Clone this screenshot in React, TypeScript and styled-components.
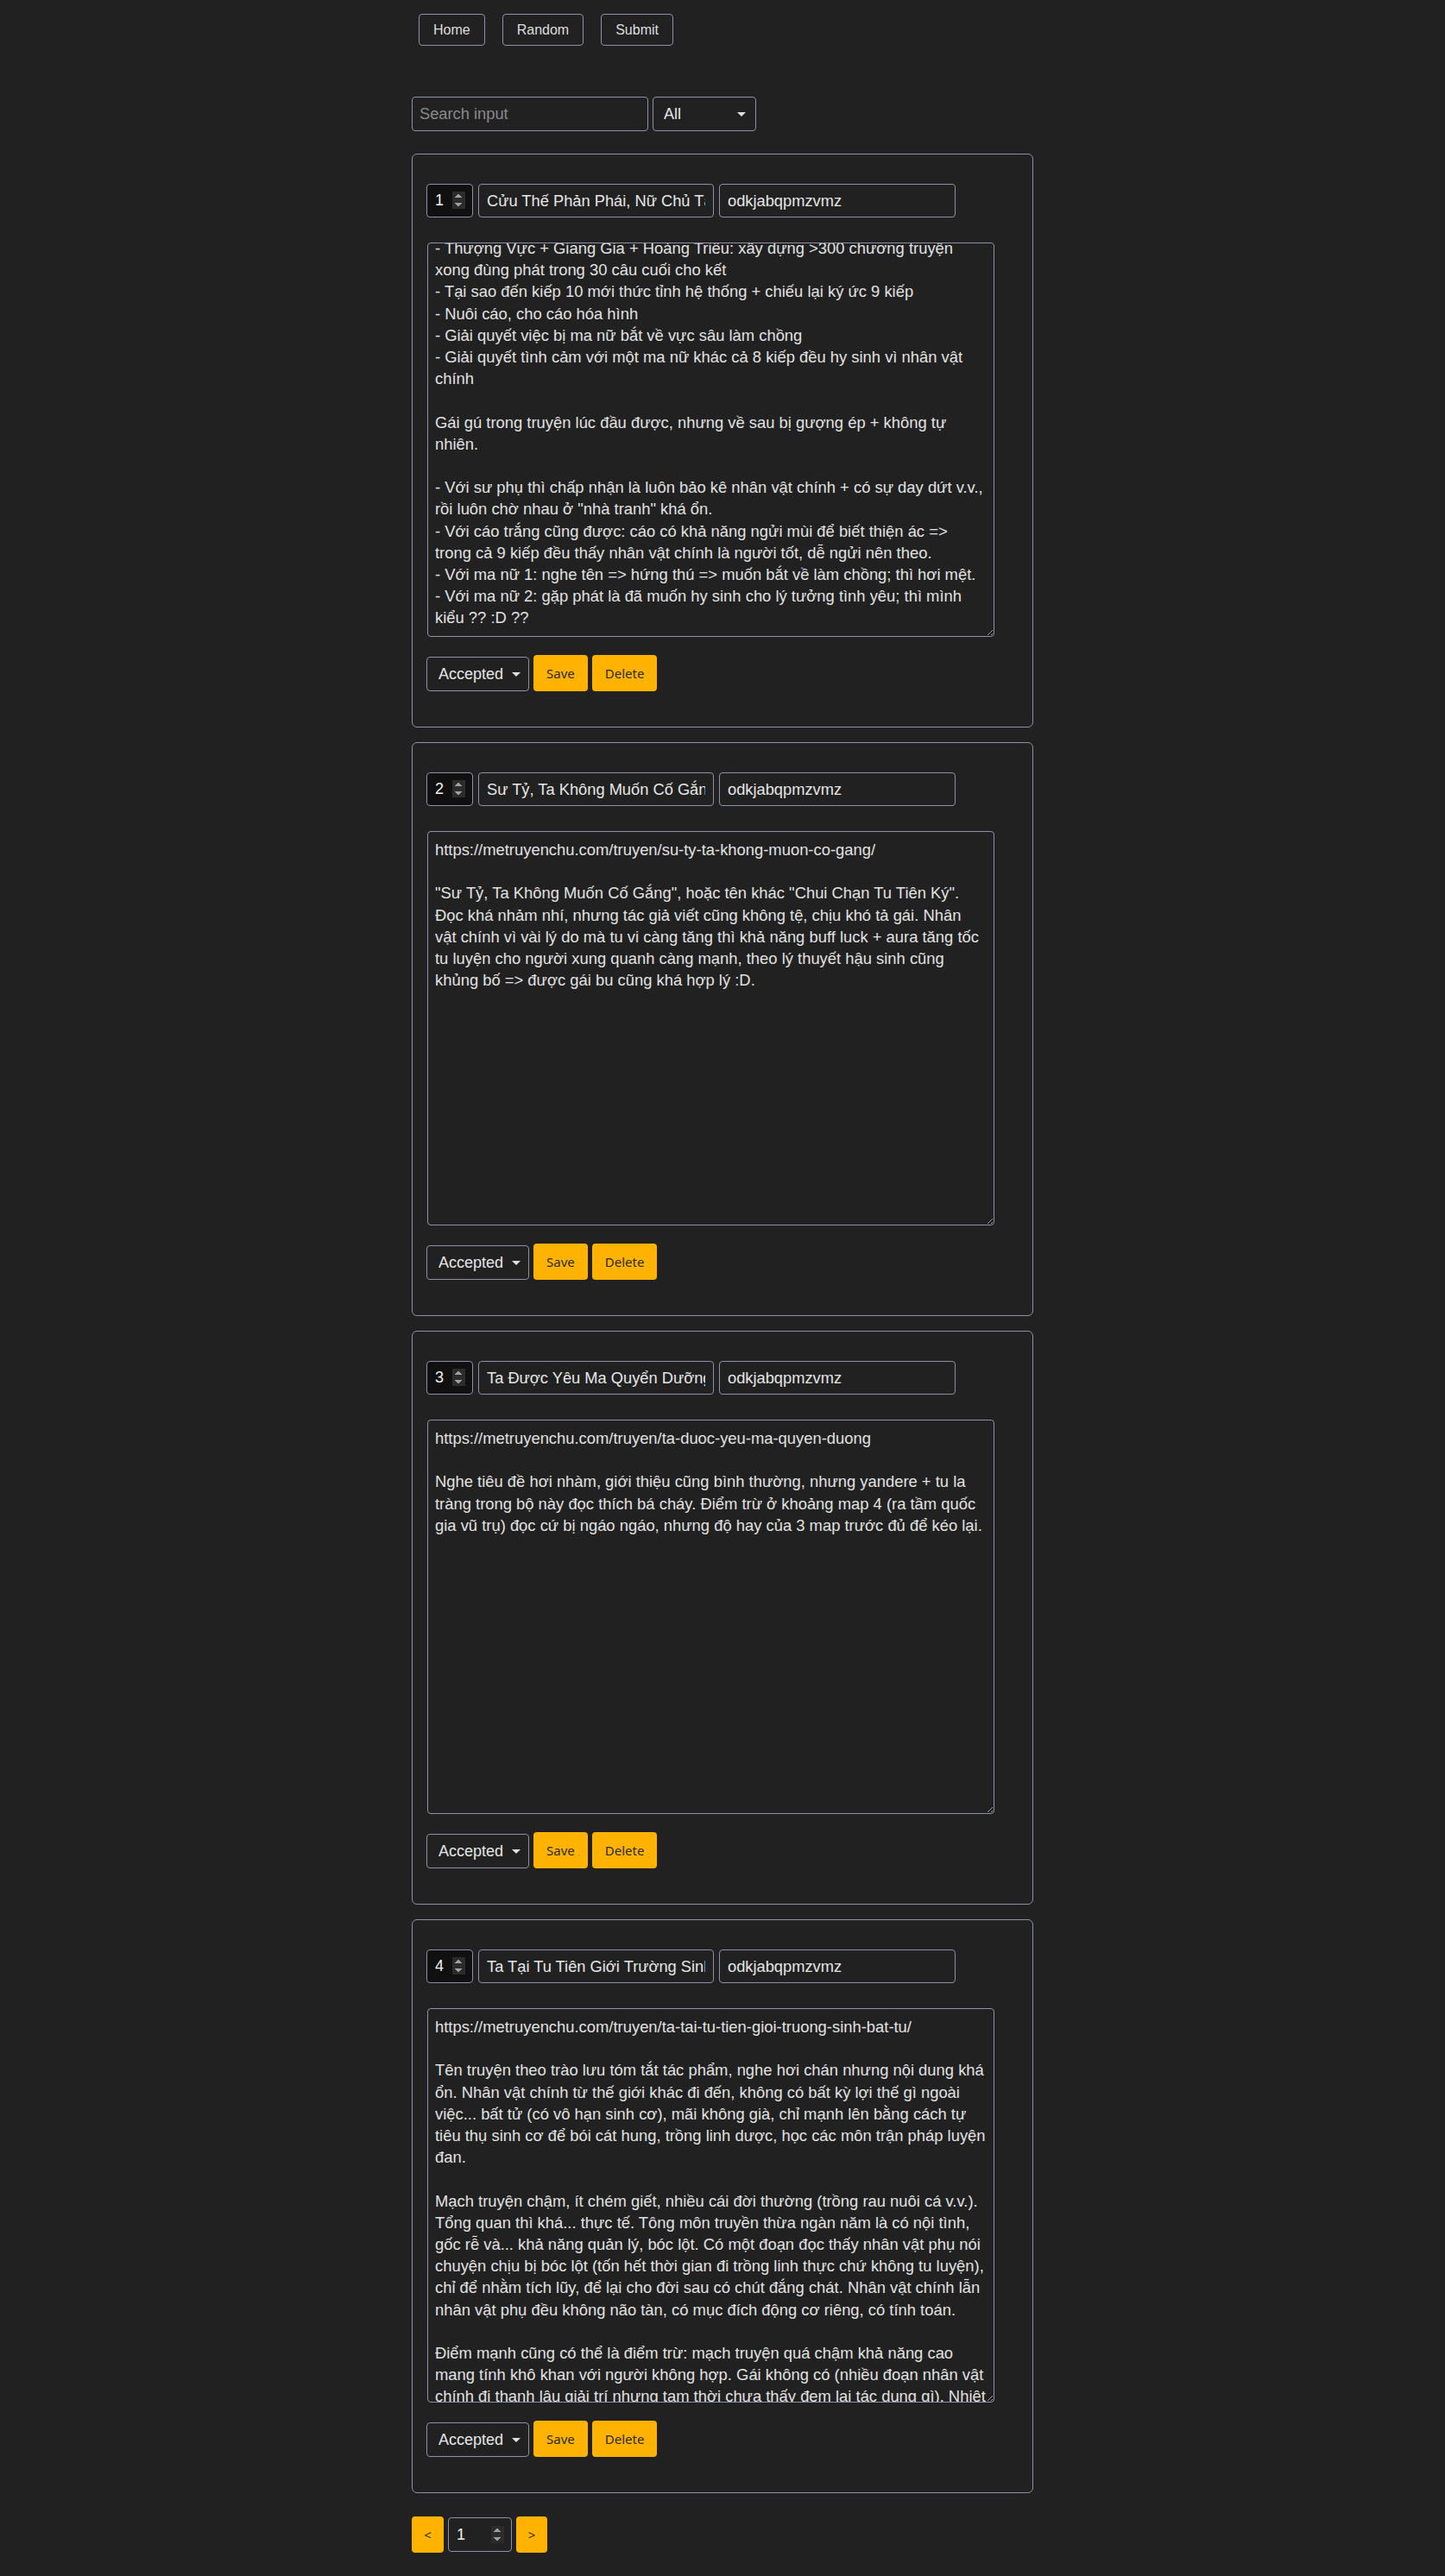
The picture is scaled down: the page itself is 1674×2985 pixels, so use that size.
import React, { useLayoutEffect, useRef } from "react";
import styled, { createGlobalStyle } from "styled-components";

const BORDER = "#8d90a7";
const AMBER = "#ffb300";
const FIELD_FONT = `18.3px "Liberation Sans", Arial, sans-serif`;

const GlobalStyle = createGlobalStyle`
  html, body {
    background: #212121;
  }
  body {
    margin: 0;
    font-family: "Liberation Sans", Arial, sans-serif;
    color: #e4e4e4;
  }
  * {
    box-sizing: border-box;
  }
`;

const Page = styled.div`
  width: 720px;
  margin: 0 auto;
  padding: 16px 0 26px;
  display: flex;
  flex-direction: column;
`;

const Nav = styled.nav`
  display: flex;
  gap: 20px;
  padding-left: 8px;
`;

const NavButton = styled.button`
  height: 37px;
  padding: 0 16px;
  border: 1px solid ${BORDER};
  border-radius: 4px;
  background: transparent;
  color: #dedede;
  font: 16px "Liberation Sans", Arial, sans-serif;
  cursor: pointer;
`;

const SearchRow = styled.div`
  display: flex;
  gap: 5px;
  margin-top: 59px;
`;

const SearchInput = styled.input`
  width: 274px;
  height: 40px;
  padding: 0 8px;
  border: 1px solid ${BORDER};
  border-radius: 4px;
  background: transparent;
  color: #e6e6e6;
  font: ${FIELD_FONT};
  outline: none;
  &::placeholder {
    color: #8a8a8a;
  }
`;

const SelectWrap = styled.div<{ $w: number; $h: number; $arrowRight: number }>`
  position: relative;
  width: ${(p) => p.$w}px;
  height: ${(p) => p.$h}px;
  &::after {
    content: "";
    position: absolute;
    right: ${(p) => p.$arrowRight}px;
    top: 50%;
    margin-top: -2px;
    border-left: 5px solid transparent;
    border-right: 5px solid transparent;
    border-top: 5px solid #e0e0e0;
    pointer-events: none;
  }
`;

const Select = styled.select<{ $pl: number }>`
  appearance: none;
  -webkit-appearance: none;
  width: 100%;
  height: 100%;
  padding: 0 24px 0 ${(p) => p.$pl}px;
  border: 1px solid ${BORDER};
  border-radius: 4px;
  background: transparent;
  color: #e6e6e6;
  font: 18px "Liberation Sans", Arial, sans-serif;
  outline: none;
  option {
    background: #212121;
  }
`;

const CardList = styled.div`
  display: flex;
  flex-direction: column;
  gap: 17px;
  margin-top: 26px;
`;

const Card = styled.section`
  border: 1px solid ${BORDER};
  border-radius: 6px;
  padding: 34px 16px 41px;
  display: flex;
  flex-direction: column;
`;

const FieldRow = styled.div`
  display: flex;
  gap: 6px;
  height: 39px;
`;

const NumberInput = styled.input<{ $w: number; $h?: number; $dark?: boolean }>`
  width: ${(p) => p.$w}px;
  height: ${(p) => (p.$h ? `${p.$h}px` : "100%")};
  padding: 0 8px 0 9px;
  border: 1px solid ${BORDER};
  border-radius: 4px;
  background: ${(p) => (p.$dark ? "#101010" : "transparent")};
  color: #f2f2f2;
  color-scheme: dark;
  font: 18px "Liberation Sans", Arial, sans-serif;
  outline: none;
  &::-webkit-inner-spin-button,
  &::-webkit-outer-spin-button {
    opacity: 1;
  }
`;

const TextInput = styled.input<{ $w: number }>`
  width: ${(p) => p.$w}px;
  height: 100%;
  padding: 0 9px;
  border: 1px solid ${BORDER};
  border-radius: 4px;
  background: transparent;
  color: #e6e6e6;
  font: ${FIELD_FONT};
  outline: none;
`;

const ReviewText = styled.textarea`
  margin: 29px 0 0 1px;
  width: 657px;
  height: 457px;
  padding: 8px 9.2px 8px 8px;
  border: 1px solid ${BORDER};
  border-radius: 4px;
  background: transparent;
  color: #e2e2e2;
  color-scheme: dark;
  font: 18.4px "Liberation Sans", Arial, sans-serif;
  line-height: 25.2px;
  resize: vertical;
  outline: none;
  scrollbar-width: none;
  &::-webkit-scrollbar {
    display: none;
  }
`;

const Actions = styled.div`
  display: flex;
  align-items: flex-end;
  gap: 5px;
  margin-top: 21px;
  height: 42px;
`;

const AmberButton = styled.button<{ $w?: number }>`
  height: 42px;
  ${(p) => (p.$w ? `width: ${p.$w}px; padding: 0;` : "padding: 0 15px;")}
  border: none;
  border-radius: 4px;
  background: ${AMBER};
  color: #2b2b2b;
  font: 15px "Noto Sans", "Open Sans", sans-serif;
  cursor: pointer;
`;

const Pagination = styled.div`
  display: flex;
  align-items: center;
  gap: 5px;
  margin-top: 27px;
`;

type Review = {
  id: number;
  title: string;
  code: string;
  text: string;
  scrollToEnd?: boolean;
};

const reviews: Review[] = [
  {
    id: 1,
    title: "Cửu Thế Phản Phái, Nữ Chủ Tất Cả Đều Là Ma Nữ",
    code: "odkjabqpmzvmz",
    scrollToEnd: true,
    text: `- Thượng Vực + Giang Gia + Hoàng Triều: xây dựng >300 chương truyện xong đùng phát trong 30 câu cuối cho kết
- Tại sao đến kiếp 10 mới thức tỉnh hệ thống + chiếu lại ký ức 9 kiếp
- Nuôi cáo, cho cáo hóa hình
- Giải quyết việc bị ma nữ bắt về vực sâu làm chồng
- Giải quyết tình cảm với một ma nữ khác cả 8 kiếp đều hy sinh vì nhân vật chính

Gái gú trong truyện lúc đầu được, nhưng về sau bị gượng ép + không tự nhiên.

- Với sư phụ thì chấp nhận là luôn bảo kê nhân vật chính + có sự day dứt v.v., rồi luôn chờ nhau ở "nhà tranh" khá ổn.
- Với cáo trắng cũng được: cáo có khả năng ngửi mùi để biết thiện ác => trong cả 9 kiếp đều thấy nhân vật chính là người tốt, dễ ngửi nên theo.
- Với ma nữ 1: nghe tên => hứng thú => muốn bắt về làm chồng; thì hơi mệt.
- Với ma nữ 2: gặp phát là đã muốn hy sinh cho lý tưởng tình yêu; thì mình kiểu ?? :D ??`,
  },
  {
    id: 2,
    title: "Sư Tỷ, Ta Không Muốn Cố Gắng",
    code: "odkjabqpmzvmz",
    text: `https://metruyenchu.com/truyen/su-ty-ta-khong-muon-co-gang/

"Sư Tỷ, Ta Không Muốn Cố Gắng", hoặc tên khác "Chui Chạn Tu Tiên Ký". Đọc khá nhảm nhí, nhưng tác giả viết cũng không tệ, chịu khó tả gái. Nhân vật chính vì vài lý do mà tu vi càng tăng thì khả năng buff luck + aura tăng tốc tu luyện cho người xung quanh càng mạnh, theo lý thuyết hậu sinh cũng khủng bố => được gái bu cũng khá hợp lý :D.`,
  },
  {
    id: 3,
    title: "Ta Được Yêu Ma Quyển Dưỡng",
    code: "odkjabqpmzvmz",
    text: `https://metruyenchu.com/truyen/ta-duoc-yeu-ma-quyen-duong

Nghe tiêu đề hơi nhàm, giới thiệu cũng bình thường, nhưng yandere + tu la tràng trong bộ này đọc thích bá cháy. Điểm trừ ở khoảng map 4 (ra tầm quốc gia vũ trụ) đọc cứ bị ngáo ngáo, nhưng độ hay của 3 map trước đủ để kéo lại.`,
  },
  {
    id: 4,
    title: "Ta Tại Tu Tiên Giới Trường Sinh Bất Tử",
    code: "odkjabqpmzvmz",
    text: `https://metruyenchu.com/truyen/ta-tai-tu-tien-gioi-truong-sinh-bat-tu/

Tên truyện theo trào lưu tóm tắt tác phẩm, nghe hơi chán nhưng nội dung khá ổn. Nhân vật chính từ thế giới khác đi đến, không có bất kỳ lợi thế gì ngoài việc... bất tử (có vô hạn sinh cơ), mãi không già, chỉ mạnh lên bằng cách tự tiêu thụ sinh cơ để bói cát hung, trồng linh dược, học các môn trận pháp luyện đan.

Mạch truyện chậm, ít chém giết, nhiều cái đời thường (trồng rau nuôi cá v.v.). Tổng quan thì khá... thực tế. Tông môn truyền thừa ngàn năm là có nội tình, gốc rễ và... khả năng quản lý, bóc lột. Có một đoạn đọc thấy nhân vật phụ nói chuyện chịu bị bóc lột (tốn hết thời gian đi trồng linh thực chứ không tu luyện), chỉ để nhằm tích lũy, để lại cho đời sau có chút đắng chát. Nhân vật chính lẫn nhân vật phụ đều không não tàn, có mục đích động cơ riêng, có tính toán.

Điểm mạnh cũng có thể là điểm trừ: mạch truyện quá chậm khả năng cao mang tính khô khan với người không hợp. Gái không có (nhiều đoạn nhân vật chính đi thanh lâu giải trí nhưng tạm thời chưa thấy đem lại tác dụng gì). Nhiệt huyết cũng không nhiều, đọc để thư giãn thì hợp.`,
  },
];

function ReviewCard({ review }: { review: Review }) {
  const ref = useRef<HTMLTextAreaElement>(null);
  useLayoutEffect(() => {
    if (review.scrollToEnd && ref.current) {
      ref.current.scrollTop = ref.current.scrollHeight;
    }
  }, [review.scrollToEnd]);

  return (
    <Card>
      <FieldRow>
        <NumberInput type="number" $w={54} $dark defaultValue={review.id} />
        <TextInput $w={273} defaultValue={review.title} />
        <TextInput $w={274} defaultValue={review.code} />
      </FieldRow>
      <ReviewText ref={ref} defaultValue={review.text} />
      <Actions>
        <SelectWrap $w={119} $h={40} $arrowRight={10}>
          <Select $pl={13} defaultValue="accepted">
            <option value="accepted">Accepted</option>
            <option value="pending">Pending</option>
            <option value="rejected">Rejected</option>
          </Select>
        </SelectWrap>
        <AmberButton>Save</AmberButton>
        <AmberButton>Delete</AmberButton>
      </Actions>
    </Card>
  );
}

export default function App() {
  return (
    <>
      <GlobalStyle />
      <Page>
        <Nav>
          <NavButton>Home</NavButton>
          <NavButton>Random</NavButton>
          <NavButton>Submit</NavButton>
        </Nav>
        <SearchRow>
          <SearchInput placeholder="Search input" />
          <SelectWrap $w={120} $h={40} $arrowRight={12}>
            <Select $pl={12} defaultValue="all">
              <option value="all">All</option>
              <option value="accepted">Accepted</option>
              <option value="pending">Pending</option>
            </Select>
          </SelectWrap>
        </SearchRow>
        <CardList>
          {reviews.map((r) => (
            <ReviewCard key={r.id} review={r} />
          ))}
        </CardList>
        <Pagination>
          <AmberButton $w={37}>&lt;</AmberButton>
          <NumberInput type="number" $w={74} $h={40} defaultValue={1} />
          <AmberButton $w={36}>&gt;</AmberButton>
        </Pagination>
      </Page>
    </>
  );
}
